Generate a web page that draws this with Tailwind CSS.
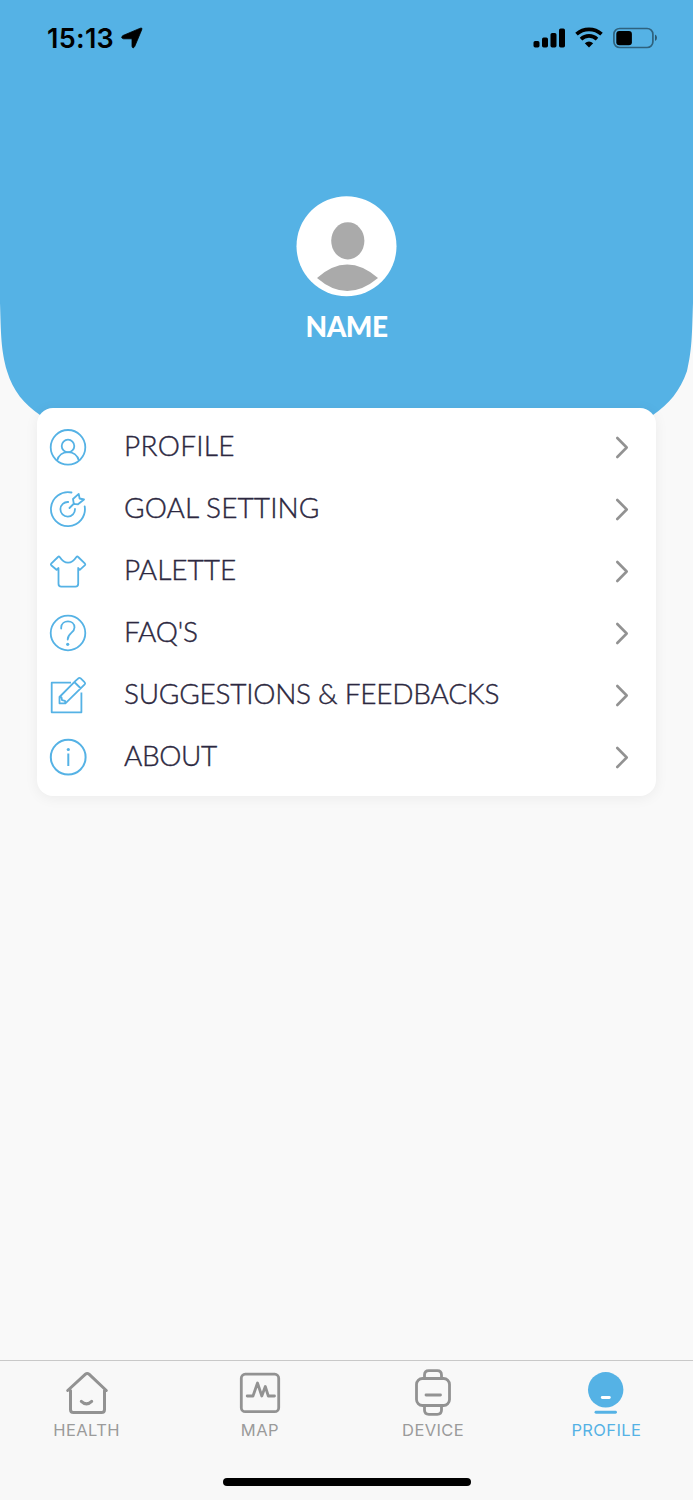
<!DOCTYPE html>
<html lang="en">
<head>
<meta charset="utf-8">
<title>Profile</title>
<script src="https://cdn.jsdelivr.net/npm/@tailwindcss/browser@4"></script>
</head>
<body class="bg-[#f9f9f9]">
<div class="relative flex h-[1500px] w-[693px] flex-col overflow-hidden bg-[#f9f9f9] font-['Lato',sans-serif]">
  <svg class="absolute left-0 top-0" width="693" height="440" viewBox="0 0 693 440" fill="#55b2e5"><path d="M0 0H693V303C692 335 692 350 687 371C680 391 669 404 653 415L600 435H93L40 415C24 404 13 391 7 371C1 350 1 335 0 303Z"/></svg>

  <header class="relative flex h-[408px] flex-col items-center">
    <div class="flex h-[76px] w-full items-center justify-between pl-[47px] pr-[36px]">
      <div class="flex items-center gap-[7px]">
        <span class="w-[67px] whitespace-nowrap font-['Inter',sans-serif] text-[27px] font-semibold leading-none tracking-[0.3px] text-black">15:13</span>
        <svg width="22" height="22" viewBox="0 0 22 22"><path d="M18.800 1.400Q21.800.2 20.600 3L13.800 19.300Q11.800 22.500 11 19.300V12.600Q11 11.800 10.200 11.800H2.500Q-1 10.800 2 8.500Z" stroke="#000" stroke-width=".8"/></svg>
      </div>
      <svg width="124" height="22" viewBox="0 0 124 22">
        <rect x="0.5" y="14" width="6" height="6.500" rx="1.700"/><rect x="9" y="10.500" width="6" height="10" rx="1.700"/><rect x="17.500" y="6" width="6" height="14.500" rx="1.700"/><rect x="26" y="1.500" width="6" height="19" rx="1.700"/>
        <path d="M43.500 7.200A18.500 18.500 0 0 1 68.500 7.200M48 12.100A11.800 11.800 0 0 1 64 12.100" fill="none" stroke="#000" stroke-width="3.700"/><path d="M51.800 16.200Q56 12.800 60.200 16.200L56 20.600Z"/>
        <rect x="80.900" y="1.500" width="39" height="19" rx="5.800" fill="none" stroke="#000" stroke-opacity=".45" stroke-width="1.700"/><rect x="83.300" y="4" width="15.600" height="14.200" rx="3"/><path d="M122 7.500Q124 8.500 124 10.700T122 14Z" fill-opacity=".5"/>
      </svg>
    </div>
    <svg class="mt-[120px]" width="101" height="101" viewBox="0 0 101 101"><circle cx="50.500" cy="50.200" r="50" fill="#fff"/><ellipse cx="51.800" cy="44.800" rx="16.600" ry="18.600" fill="#aaa"/><path d="M21 82Q51 55 82 82Q51 108 21 82Z" fill="#aaa"/></svg>
    <h1 class="mt-[12px] whitespace-nowrap text-[28px] font-black leading-[34px] tracking-[-0.5px] text-white">NAME</h1>
  </header>

  <main class="relative mx-[37px] h-[388px] w-[619px] rounded-[16px] bg-white pt-2 text-[28px] font-light text-[#2c2840] shadow-[0_2px_14px_rgba(0,0,0,0.06)] [-webkit-text-stroke:0.4px_#2c2840]">
    <div class="flex h-[62px] items-center pl-[12px] pr-[26px]">
      <svg class="shrink-0" width="38" height="38" viewBox="0 0 38 38" fill="none" stroke="#55b2e5" stroke-width="1.800"><circle cx="19" cy="19.300" r="17.300"/><circle cx="19" cy="18" r="6.300"/><path d="M8 32.800C11 21.300 27 21.300 30 32.800"/></svg>
      <span class="ml-[37px] flex-1 whitespace-nowrap pb-[4px] tracking-[0.3px]">PROFILE</span>
      <svg width="16" height="24" viewBox="0 0 16 24" fill="none" stroke="#929292" stroke-width="2.600" stroke-linecap="round" stroke-linejoin="round"><path d="M3.300 3L12.700 12.500L3.300 22"/></svg>
    </div>
    <div class="flex h-[62px] items-center pl-[12px] pr-[26px]">
      <svg class="shrink-0" width="38" height="38" viewBox="0 0 38 38" fill="none" stroke="#55b2e5" stroke-width="1.800" stroke-linecap="round" stroke-linejoin="round"><path d="M22.500 2.500A17 17 0 1 0 35.700 16.300M19.200 12A7.300 7.300 0 1 0 26 19M20.500 18L25 13.500M24.800 13.800L24 9L29.700 3.900L30.600 8.500L35 9.500L29 14.300Z"/></svg>
      <span class="ml-[37px] flex-1 whitespace-nowrap pb-[4px] tracking-[0.1px]">GOAL SETTING</span>
      <svg width="16" height="24" viewBox="0 0 16 24" fill="none" stroke="#929292" stroke-width="2.600" stroke-linecap="round" stroke-linejoin="round"><path d="M3.300 3L12.700 12.500L3.300 22"/></svg>
    </div>
    <div class="flex h-[62px] items-center pl-[12px] pr-[26px]">
      <svg class="shrink-0" width="38" height="38" viewBox="0 0 38 38" fill="none" stroke="#55b2e5" stroke-width="1.800" stroke-linecap="round" stroke-linejoin="round"><path d="M9.500 16.500V31.800Q9.500 34.700 12.200 34.700H26.500Q29.200 34.700 29.200 31.800V16.500M9.500 16L7.500 17.800L2.200 13.200Q1.500 12.500 2.200 11.700L9 5Q9.800 4 10.700 5C15.500 12.500 22.500 12.500 27.400 5Q28.300 4 29.200 5L36 11.700Q36.600 12.500 36 13.200L30.800 17.800L29.200 16"/></svg>
      <span class="ml-[37px] flex-1 whitespace-nowrap pb-[4px] tracking-[0px]">PALETTE</span>
      <svg width="16" height="24" viewBox="0 0 16 24" fill="none" stroke="#929292" stroke-width="2.600" stroke-linecap="round" stroke-linejoin="round"><path d="M3.300 3L12.700 12.500L3.300 22"/></svg>
    </div>
    <div class="flex h-[62px] items-center pl-[12px] pr-[26px]">
      <svg class="shrink-0" width="38" height="38" viewBox="0 0 38 38" fill="none" stroke="#55b2e5" stroke-width="1.800" stroke-linecap="round"><circle cx="19" cy="19" r="17.300"/><path d="M12.200 14.500V13.500C12.500 5.300 25.500 5.300 25.500 13.500C25.500 19 18.700 19 18.700 25.500"/><circle cx="18.700" cy="30.300" r="1.600" fill="#55b2e5" stroke="none"/></svg>
      <span class="ml-[37px] flex-1 whitespace-nowrap pb-[4px] tracking-[-0.200px]">FAQ'S</span>
      <svg width="16" height="24" viewBox="0 0 16 24" fill="none" stroke="#929292" stroke-width="2.600" stroke-linecap="round" stroke-linejoin="round"><path d="M3.300 3L12.700 12.500L3.300 22"/></svg>
    </div>
    <div class="flex h-[62px] items-center pl-[12px] pr-[26px]">
      <svg class="shrink-0" width="38" height="38" viewBox="0 0 38 38" fill="none" stroke="#55b2e5" stroke-width="1.800" stroke-linejoin="round"><path d="M22 6.700H2.700V36.300H32.400V16.500M26.500 4.900L29.400 2.300Q30.500 1.400 31.700 2.400L35.500 6.100Q36.700 7.200 35.700 8.400L16.400 27.300H10.500V21ZM25.300 6L31.900 12.500M10.700 21.200L12.500 21.500L13 24.200L16 24.800L16.300 27.200"/></svg>
      <span class="ml-[37px] flex-1 whitespace-nowrap pb-[4px] tracking-[-0.25px]">SUGGESTIONS &amp; FEEDBACKS</span>
      <svg width="16" height="24" viewBox="0 0 16 24" fill="none" stroke="#929292" stroke-width="2.600" stroke-linecap="round" stroke-linejoin="round"><path d="M3.300 3L12.700 12.500L3.300 22"/></svg>
    </div>
    <div class="flex h-[62px] items-center pl-[12px] pr-[26px]">
      <svg class="shrink-0" width="38" height="38" viewBox="0 0 38 38" fill="none" stroke="#55b2e5" stroke-width="2"><circle cx="19.200" cy="19.200" r="17.400"/><path d="M19.300 15.500V28"/><circle cx="19.300" cy="11.500" r="1.600" fill="#55b2e5" stroke="none"/></svg>
      <span class="ml-[37px] flex-1 whitespace-nowrap pb-[4px] tracking-[-0.4px]">ABOUT</span>
      <svg width="16" height="24" viewBox="0 0 16 24" fill="none" stroke="#929292" stroke-width="2.600" stroke-linecap="round" stroke-linejoin="round"><path d="M3.300 3L12.700 12.500L3.300 22"/></svg>
    </div>
  </main>

  <nav class="mt-auto flex h-[140px] flex-col items-center border-t border-[#c9c9c9] bg-[#f8f8f8] font-['Inter',sans-serif] text-[16.500px] tracking-[0.4px] text-[#9b9b9b]">
    <div class="grid w-full grid-cols-4 pt-[7px]">
      <div class="flex flex-col items-center">
        <svg width="48" height="50" viewBox="0 0 48 50" fill="none" stroke="#929292" stroke-width="3" stroke-linecap="round" stroke-linejoin="round"><path d="M4.700 22.500L22.500 6.200Q24.200 4.700 26 6.200L43.300 22.500M7.500 22.500V41.500Q7.500 44.500 10.500 44.500H38.500Q41.500 44.500 41.500 41.500V22.500M18.300 33.300Q23.500 38.300 28.700 33.300"/></svg>
        <span class="leading-6">HEALTH</span>
      </div>
      <div class="flex flex-col items-center">
        <svg width="48" height="50" viewBox="0 0 48 50" fill="none" stroke="#929292" stroke-width="2.800" stroke-linecap="round" stroke-linejoin="round"><rect x="5.300" y="6.200" width="37.400" height="37.500" rx="4"/><path d="M11.200 28H17L21.500 15L25.800 28L29.300 18.500L32.300 28H38.500"/></svg>
        <span class="leading-6">MAP</span>
      </div>
      <div class="flex flex-col items-center">
        <svg width="48" height="50" viewBox="0 0 48 50" fill="none" stroke="#929292" stroke-width="2.800" stroke-linecap="round"><rect x="7.500" y="10.500" width="33" height="27" rx="6"/><path d="M15.500 10V7Q15.500 2.600 19.900 2.600H28.200Q32.500 2.600 32.500 7V10M15.500 38V42Q15.500 46.300 19.900 46.300H28.200Q32.500 46.300 32.500 42V38M17 27H31.500"/></svg>
        <span class="leading-6">DEVICE</span>
      </div>
      <div class="flex flex-col items-center text-[#55b2e5]">
        <svg width="48" height="50" viewBox="0 0 48 50" stroke-width="2.900" stroke-linecap="round"><circle cx="23.700" cy="21.800" r="17.700" fill="#55b2e5"/><path d="M20.300 29.500H27.300" stroke="#fff"/><path d="M14 44.200H33.500" stroke="#55b2e5"/></svg>
        <span class="leading-6">PROFILE</span>
      </div>
    </div>
    <div class="mt-[36px] h-[8px] w-[248px] rounded-full bg-black"></div>
  </nav>
</div>
</body>
</html>
